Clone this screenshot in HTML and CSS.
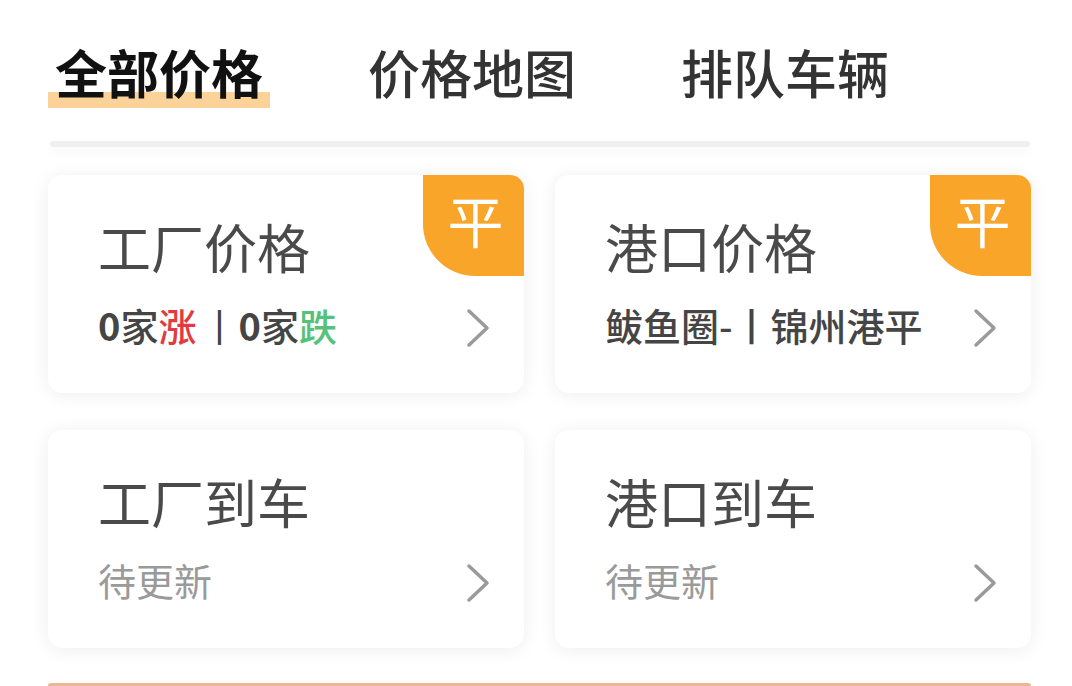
FILE: index.html
```html
<!DOCTYPE html>
<html lang="zh-CN">
<head>
    <meta charset="UTF-8">
    <meta name="viewport" content="width=device-width, initial-scale=1.0">
    <title>价格</title>
    <link rel="stylesheet" href="styles.css">
</head>
<body>
    <div class="tabs">
        <div class="tab active">全部价格</div>
        <div class="tab">价格地图</div>
        <div class="tab">排队车辆</div>
    </div>
    <div class="divider"></div>

    <div class="grid">
        <div class="card">
            <span class="badge">平</span>
            <div class="card-title">工厂价格</div>
            <div class="card-row">
                <div class="card-sub strong"><b>0</b>家<span class="up">涨</span><span class="sep">丨</span><b>0</b>家<span class="down">跌</span></div>
                <svg class="chevron" viewBox="0 0 24 40" width="24" height="40"><path d="M3 3 L21 20 L3 37" /></svg>
            </div>
        </div>
        <div class="card">
            <span class="badge">平</span>
            <div class="card-title">港口价格</div>
            <div class="card-row">
                <div class="card-sub strong">鲅鱼圈-丨锦州港平</div>
                <svg class="chevron" viewBox="0 0 24 40" width="24" height="40"><path d="M3 3 L21 20 L3 37" /></svg>
            </div>
        </div>
        <div class="card">
            <div class="card-title">工厂到车</div>
            <div class="card-row">
                <div class="card-sub muted">待更新</div>
                <svg class="chevron" viewBox="0 0 24 40" width="24" height="40"><path d="M3 3 L21 20 L3 37" /></svg>
            </div>
        </div>
        <div class="card">
            <div class="card-title">港口到车</div>
            <div class="card-row">
                <div class="card-sub muted">待更新</div>
                <svg class="chevron" viewBox="0 0 24 40" width="24" height="40"><path d="M3 3 L21 20 L3 37" /></svg>
            </div>
        </div>
    </div>

    <div class="next-card"></div>
</body>
</html>
```

FILE: styles.css
```css
body {
    margin: 0;
    padding: 0;
    background: #fff;
    font-family: "Noto Sans CJK SC", "Noto Sans", sans-serif;
    overflow: hidden;
}

/* tabs */
.tabs {
    display: flex;
    gap: 105px;
    padding: 41px 0 0 55px;
}
.tab {
    position: relative;
    font-size: 52px;
    line-height: 1.2;
    font-weight: 500;
    color: #333;
}
.tab.active {
    font-weight: 600;
    color: #111;
}
.tab.active::after {
    content: "";
    position: absolute;
    left: -7px;
    right: -7px;
    bottom: -5px;
    height: 16px;
    background: #fbd398;
    z-index: -1;
}
.divider {
    height: 6px;
    margin: 38px 42px 0 50px;
    background: #f0f0f0;
    border-radius: 3px;
    box-shadow: 0 4px 10px rgba(0, 0, 0, 0.04);
}

/* cards */
.grid {
    display: grid;
    grid-template-columns: 476px 476px;
    column-gap: 31px;
    row-gap: 37px;
    padding: 28px 0 0 48px;
}
.card {
    position: relative;
    height: 218px;
    box-sizing: border-box;
    padding: 39px 34px 0 50px;
    background: #fff;
    border-radius: 14px;
    box-shadow: 0 2px 18px rgba(0, 0, 0, 0.07);
    overflow: hidden;
}
.badge {
    position: absolute;
    top: 0;
    right: 0;
    width: 101px;
    height: 101px;
    display: flex;
    align-items: center;
    justify-content: center;
    background: #f8a52a;
    color: #fff;
    font-size: 56px;
    line-height: 1;
    border-bottom-left-radius: 52px;
    padding: 0 0 14px 4px;
    box-sizing: border-box;
}
.card-title {
    font-size: 53px;
    line-height: 64px;
    color: #4a4a4a;
}
.card-row {
    display: flex;
    align-items: center;
    justify-content: space-between;
    margin-top: 24px;
}
.card-sub {
    font-size: 38px;
    line-height: 44px;
}
.card-sub.strong {
    font-weight: 500;
    color: #454545;
}
.card-sub b {
    font-weight: 700;
}
.card-sub.muted {
    color: #9a9a9a;
}
.up {
    color: #e23b3f;
}
.down {
    color: #55c27c;
}
.sep {
    margin: 0 0 0 4px;
    font-weight: 400;
}
.chevron {
    margin-top: 6px;
    fill: none;
    stroke: #9a9a9a;
    stroke-width: 3.5;
    stroke-linecap: round;
    stroke-linejoin: round;
}

.next-card {
    height: 3px;
    margin: 35px 41px 0 48px;
    border-radius: 14px 14px 0 0;
    background: #ebb896;
}
```
